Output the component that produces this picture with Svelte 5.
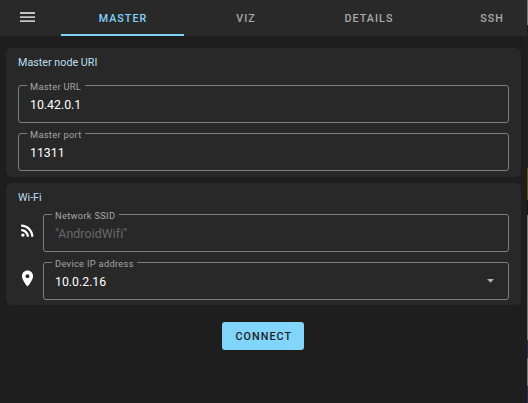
<script>
  const tabs = ['MASTER', 'VIZ', 'DETAILS', 'SSH'];
  let active = $state('MASTER');
</script>

{#snippet field(label, value, hint = false, dropdown = false)}
  <fieldset>
    <legend>{label}</legend>
    <div class="value" class:hint>
      <span>{value}</span>
      {#if dropdown}
        <svg class="arrow" width="7" height="4" viewBox="0 0 7 4"><path d="M0 0h7L3.5 3.7z" fill="#b3b3b3" /></svg>
      {/if}
    </div>
  </fieldset>
{/snippet}

<div class="app">
  <header>
    <div class="menu">
      <svg width="15" height="11" viewBox="0 0 15 11"><path d="M0 0h15v1.9H0zM0 4.2h15v1.7H0zM0 8.2h15v1.7H0z" fill="#c4c4c4" /></svg>
    </div>
    <nav>
      {#each tabs as tab}
        <button class="tab" class:active={tab === active} onclick={() => (active = tab)}>{tab}</button>
      {/each}
    </nav>
  </header>

  <main>
    <section class="master">
      <h2>Master node URI</h2>
      {@render field('Master URL', '10.42.0.1')}
      {@render field('Master port', '11311')}
    </section>

    <section class="wifi">
      <h2>Wi-Fi</h2>
      <div class="row">
        <svg class="icon" width="19" height="19" viewBox="0 0 24 24" fill="#fff"><circle cx="6.18" cy="17.82" r="2.18" /><path d="M4 4.44v2.83c7.03 0 12.73 5.7 12.73 12.73h2.83c0-8.59-6.97-15.56-15.56-15.56zm0 5.66v2.83c3.9 0 7.07 3.17 7.07 7.07h2.83c0-5.47-4.43-9.9-9.9-9.9z" /></svg>
        {@render field('Network SSID', '"AndroidWifi"', true)}
      </div>
      <div class="row">
        <svg class="icon" width="19" height="19" viewBox="0 0 24 24" fill="#fff"><path d="M12 2C8.13 2 5 5.13 5 9c0 5.25 7 13 7 13s7-7.75 7-13c0-3.87-3.13-7-7-7zm0 9.5a2.5 2.5 0 0 1 0-5 2.5 2.5 0 0 1 0 5z" /></svg>
        {@render field('Device IP address', '10.0.2.16', false, true)}
      </div>
    </section>

    <button class="connect">CONNECT</button>
  </main>
  <div class="edge"></div>
</div>

<style>
  :global(body) { background: #1e1e1e; }
  .app {
    position: relative;
    box-sizing: border-box;
    width: 528px;
    height: 403px;
    overflow: hidden;
    background: #1e1e1e;
    font-family: Roboto, sans-serif;
    color: #fff;
  }
  header { display: flex; height: 36px; background: #292929; }
  .menu { width: 61px; flex: none; box-sizing: border-box; padding: 12px 0 0 20px; }
  .menu svg { display: block; }
  nav { display: flex; }
  button { font-family: inherit; border: 0; margin: 0; padding: 0; }
  .tab {
    flex: none;
    width: 123px;
    height: 36px;
    box-sizing: border-box;
    padding: 2px 0 0 1px;
    background: none;
    border-bottom: 2px solid transparent;
    color: #a9a9a9;
    font-size: 10.7px;
    font-weight: 500;
    letter-spacing: 1.05px;
  }
  .tab.active { color: #81d4fa; border-color: #81d4fa; }
  main { display: flex; flex-direction: column; padding: 12px 7px 0 6px; }
  section { box-sizing: border-box; border-radius: 6px; background: #282828; padding: 0 12px; }
  .master { height: 129px; }
  .wifi { height: 122px; margin-top: 6px; }
  h2 { margin: 0; padding-top: 7px; height: 22px; box-sizing: content-box; font-size: 10.75px; line-height: 15px; font-weight: 400; color: #b9dff0; }
  .wifi h2 { height: 16px; }
  fieldset {
    flex: 1;
    min-width: 0;
    box-sizing: border-box;
    height: 46px;
    margin: 0 0 2px;
    padding: 0 9px 0 8px;
    border: 1px solid #7c7c7c;
    border-radius: 3px;
  }
  legend { padding: 4px 3.5px 0 3px; font-size: 9.3px; line-height: 12px; height: 12px; letter-spacing: 0.3px; color: #a6a6a6; }
  .value { display: flex; align-items: center; justify-content: space-between; padding: 0 5px 0 3px; height: 24px; font-size: 12.3px; letter-spacing: 0; }
  .hint { color: #686868; letter-spacing: 0.1px; }
  .arrow { margin-top: -2px; }
  .row { display: flex; }
  .icon { flex: none; margin: 15px 6px 0 0; }
  .connect {
    align-self: center;
    width: 82px;
    height: 28px;
    margin: 17px 0.5px 0 0;
    padding: 1px 0 0 1px;
    border-radius: 3px;
    background: #81d4fa;
    color: #1e1e1e;
    font-size: 10.8px;
    font-weight: 500;
    letter-spacing: 1.05px;
  }
  .edge {
    position: absolute;
    top: 0;
    right: 0;
    width: 1px;
    height: 403px;
    background: linear-gradient(#777 0 25px, #202020 25px 168px, #6a5010 168px 200px, #151515 200px 215px, #777 215px 340px, #252c50 340px 358px, #777 358px 386px, #252c50 386px);
  }
</style>
